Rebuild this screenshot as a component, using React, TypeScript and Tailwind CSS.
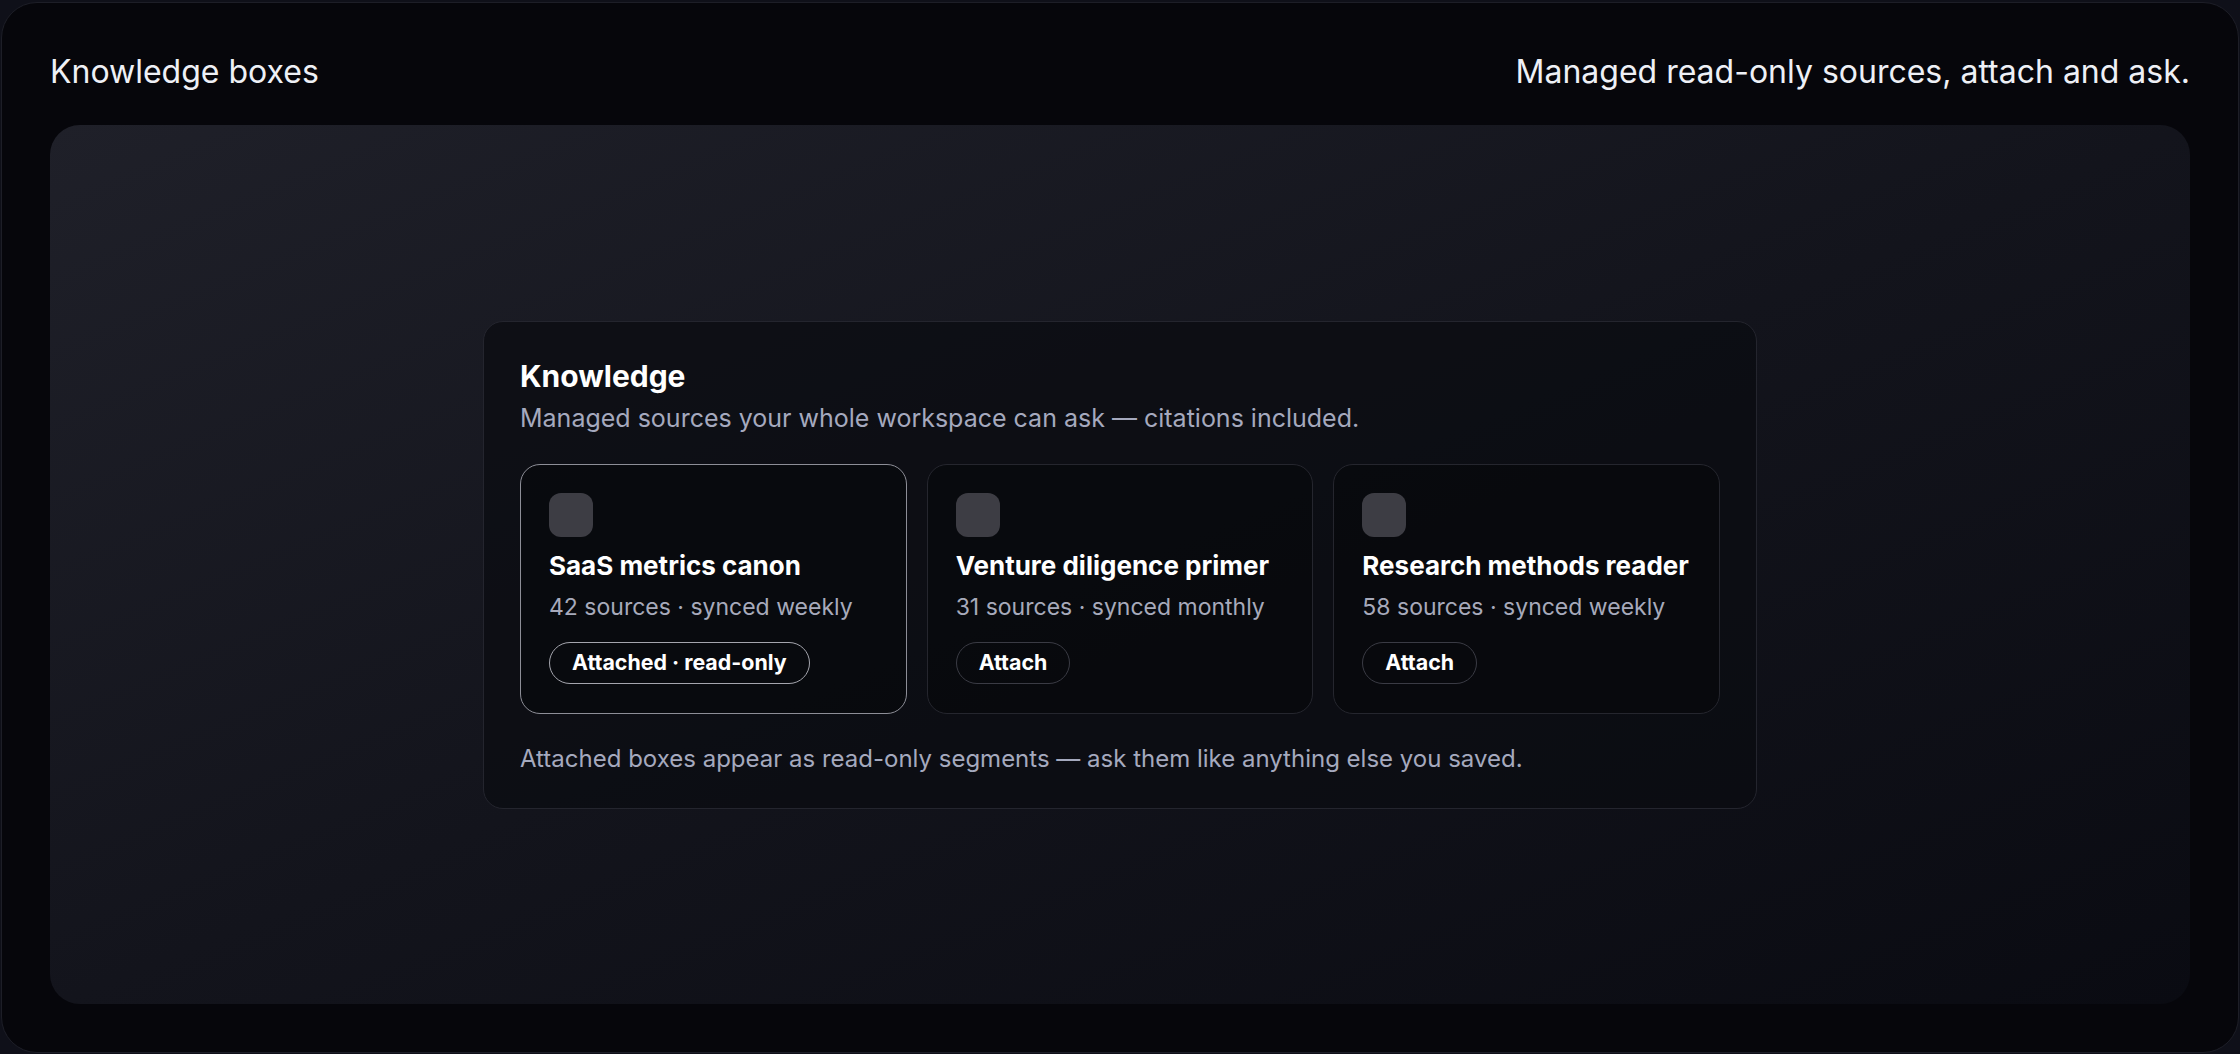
const boxes = [
  { name: "SaaS metrics canon", meta: "42 sources · synced weekly", attached: true },
  { name: "Venture diligence primer", meta: "31 sources · synced monthly", attached: false },
  { name: "Research methods reader", meta: "58 sources · synced weekly", attached: false },
];

function BoxCard({ name, meta, attached }: { name: string; meta: string; attached: boolean }) {
  return (
    <div
      className={`flex flex-col rounded-[20px] border bg-[#07080c]/70 px-[28px] pt-[28px] pb-[29px] ${
        attached ? "border-[#8d8e97]" : "border-[#25262e]"
      }`}
    >
      <div className="h-[44px] w-[44px] rounded-[12px] bg-[#3d3d44]" />
      <div className="mt-[13px] text-[26px] leading-[32px] font-bold text-white">{name}</div>
      <div className="mt-[10px] text-[23px] leading-[30px] text-[#a7aabb]">{meta}</div>
      <div className="mt-[20px] flex">
        <button
          className={`h-[42px] rounded-full border px-[22px] text-[21.4px] font-bold text-white ${
            attached ? "border-[#a4a5ad]" : "border-[#3a3b44]"
          }`}
        >
          {attached ? "Attached · read-only" : "Attach"}
        </button>
      </div>
    </div>
  );
}

export default function App() {
  return (
    <div
      className="h-[1054px] w-full bg-[#0f1019] pt-[2px] pb-[1px] px-px"
      style={{ fontFamily: "Inter, 'Noto Sans', sans-serif" }}
    >
      <div className="flex h-full flex-col rounded-[36px] border border-[#1d1e27] bg-[#06060b] px-[48px] pt-[47px] pb-[48px]">
        <header className="flex h-[44px] items-center justify-between text-[32px] text-[#eef0f6]">
          <h1>Knowledge boxes</h1>
          <p>Managed read-only sources, attach and ask.</p>
        </header>

        <main className="mt-[31px] flex flex-1 items-center justify-center rounded-[30px] bg-gradient-to-br from-[#1f2029] via-[#13141c] to-[#0a0b12]">
          <section className="w-[1274px] rounded-[20px] border border-[#24252e] bg-[#0b0c12]/75 px-[36px] pt-[35px] pb-[33px]">
            <h2 className="text-[30px] leading-[38px] font-bold text-white">Knowledge</h2>
            <p className="mt-[7px] text-[25px] leading-[32px] text-[#a5a9be]">
              Managed sources your whole workspace can ask — citations included.
            </p>
            <div className="mt-[30px] grid grid-cols-3 gap-[20px]">
              {boxes.map((b) => (
                <BoxCard key={b.name} {...b} />
              ))}
            </div>
            <p className="mt-[29px] text-[24px] leading-[32px] text-[#a5a9be]">
              Attached boxes appear as read-only segments — ask them like anything else you saved.
            </p>
          </section>
        </main>
      </div>
    </div>
  );
}
